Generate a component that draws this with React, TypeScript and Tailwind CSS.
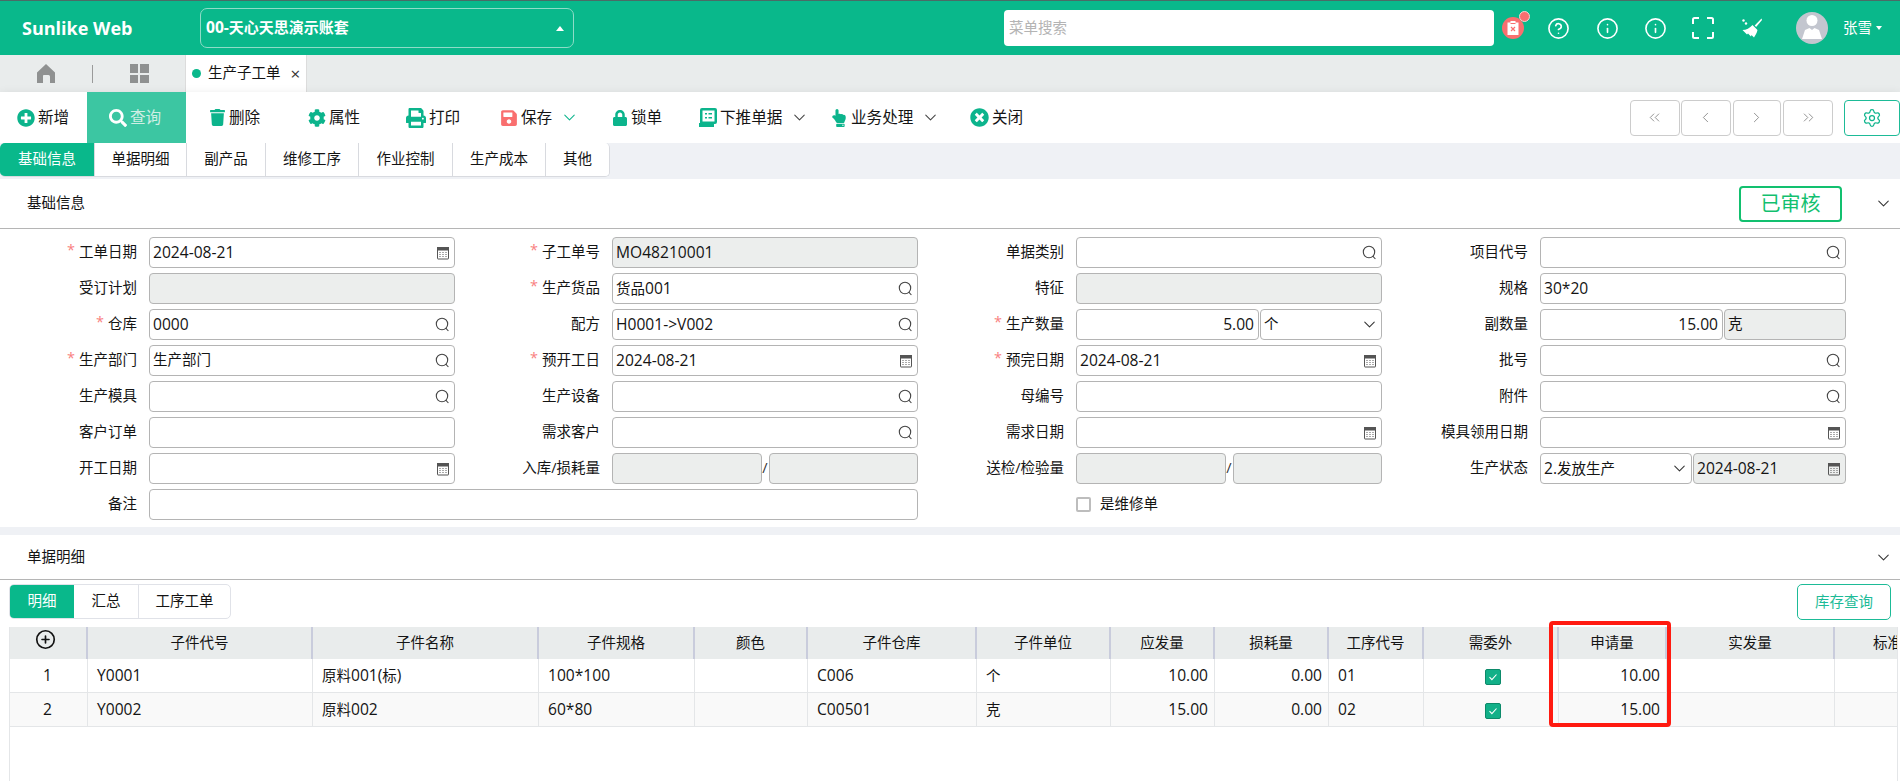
import React from "react";
import { ChevronDown, ChevronLeft, ChevronRight, ChevronsLeft, ChevronsRight, CirclePlus, Settings, CircleHelp, Info } from "lucide-react";
import { FaPlusCircle, FaSearch, FaTrash, FaCog, FaPrint, FaSave, FaLock, FaHandPointUp, FaTimesCircle } from "react-icons/fa";

/* Latin runs sit slightly larger than the CJK runs, as they do in the reference */
const T = ({ s }: { s?: string }) => (
  <>
    {(s ?? "").split(/([\x00-\x7f]+)/).map((p, i) =>
      p === "" ? null : /^[\x00-\x7f]/.test(p) ? <span key={i} className="text-[15.6px]">{p}</span> : <span key={i}>{p}</span>
    )}
  </>
);

const Cal = () => (
  <svg width="14" height="14" viewBox="0 0 14 14" fill="none" stroke="#555" className="shrink-0">
    <rect x="1.5" y="1.500" width="11" height="11.500" rx="0.5" />
    <rect x="1.5" y="1.500" width="11" height="2.500" fill="#555" />
    <path d="M3.500 6.500h1M6.500 6.500h1M9.500 6.500h1M3.500 8.500h1M6.500 8.500h1M9.500 8.500h1M3.500 10.500h1M6.500 10.500h1M9.500 10.500h1" strokeWidth="1" />
  </svg>
);
const Mag = () => (
  <svg width="15" height="15" viewBox="0 0 15 15" fill="none" stroke="#444" strokeWidth="1.1" className="shrink-0">
    <circle cx="7" cy="7" r="5.700" />
    <path d="M10.800 11.200l2.600 2.800" />
  </svg>
);
const Chev = () => <ChevronDown size={19} strokeWidth={1.3} color="#333" className="shrink-0 mr-[-2px]" />;

type BoxProps = { v?: string; icon?: "s" | "c" | "d"; off?: boolean; right?: boolean; className?: string };
const Box = ({ v, icon, off, right, className = "" }: BoxProps) => (
  <div className={`h-[31px] min-w-0 flex items-center border border-[#b4b4b4] rounded-[4px] pl-[3px] pr-[4px] ${off ? "bg-[#eceeed]" : "bg-white"} ${className}`}>
    <span className={`flex-1 whitespace-nowrap text-[#141414] ${right ? "text-right" : ""}`}><T s={v} /></span>
    {icon === "s" && <Mag />}
    {icon === "c" && <Cal />}
    {icon === "d" && <Chev />}
  </div>
);
const Lab = ({ t, req }: { t?: string; req?: boolean }) => (
  <div className="h-[31px] flex items-center justify-end pr-[12px] whitespace-nowrap text-[#141414]">
    {req && <span className="text-[#f98080] mr-[4px] relative top-[-2px]">*</span>}
    {t}
  </div>
);
const Slash = () => <span className="w-[7px] text-center shrink-0 text-[#333]">/</span>;

const tools = [
  { t: "新增", i: <FaPlusCircle size={18} />, c: "w-[87px] pl-[17px]" },
  { t: "查询", i: <FaSearch size={18} color="#fff" />, c: "w-[99px] pl-[22px] bg-[#3cc6a2] text-[#cfeee4]" },
  { t: "删除", i: <FaTrash size={17} />, c: "w-[98px] pl-[23px]" },
  { t: "属性", i: <FaCog size={18} />, c: "w-[98px] pl-[24px]" },
  { t: "打印", i: <FaPrint size={20} />, c: "w-[94px] pl-[24px]" },
  { t: "保存", i: <FaSave size={18} color="#f96f6f" />, c: "w-[112px] pl-[24px]", d: "#0cb48c" },
  { t: "锁单", i: <FaLock size={16} />, c: "w-[87px] pl-[24px]" },
  {
    t: "下推单据",
    i: (
      <svg width="18" height="19" viewBox="0 0 18 19">
        <path d="M3 0h13a2 2 0 0 1 2 2v12a2 2 0 0 1-2 2h-1v3H0v-4h1V2a2 2 0 0 1 2-2z" fill="#0cb48c" />
        <rect x="3.500" y="2.500" width="12" height="11" fill="#fff" />
        <path d="M6 5h2v1.500H6zM9.500 5h3.500v1.500H9.500zM6 9h2v1.500H6zM9.500 9h3.500v1.500H9.500z" fill="#0cb48c" />
      </svg>
    ),
    c: "w-[131px] pl-[24px]",
    d: "#444",
  },
  { t: "业务处理", i: <FaHandPointUp size={18} />, c: "w-[140px] pl-[24px]", d: "#444" },
  { t: "关闭", i: <FaTimesCircle size={19} />, c: "w-[90px] pl-[24px]" },
];

const pageTabs = [
  ["基础信息", "w-[94px]"],
  ["单据明细", "w-[92px]"],
  ["副产品", "w-[79px]"],
  ["维修工序", "w-[93px]"],
  ["作业控制", "w-[94px]"],
  ["生产成本", "w-[93px]"],
  ["其他", "w-[64px]"],
];

const cols = "grid grid-cols-[78px_225px_226px_156px_113px_169px_134px_104px_114px_95px_135px_108px_168px_136px]";
const heads = ["子件代号", "子件名称", "子件规格", "颜色", "子件仓库", "子件单位", "应发量", "损耗量", "工序代号", "需委外", "申请量", "实发量", "标准用量"];
const rows = [
  ["1", "Y0001", "原料001(标)", "100*100", "", "C006", "个", "10.00", "0.00", "01", "x", "10.00", "", ""],
  ["2", "Y0002", "原料002", "60*80", "", "C00501", "克", "15.00", "0.00", "02", "x", "15.00", "", ""],
];
const rightCols = [7, 8, 11];

const Check = () => (
  <span className="w-[16px] h-[16px] rounded-[2px] bg-[#12b088] border border-[#0c8a6a] flex items-center justify-center">
    <svg width="10" height="10" viewBox="0 0 10 10" fill="none" stroke="#fff" strokeWidth="1.1">
      <path d="M1.500 5.200l2.400 2.400L8.500 2.500" />
    </svg>
  </span>
);

export default function App() {
  return (
    <div className="relative w-[1900px] h-[781px] overflow-hidden bg-white text-[14.5px] leading-none font-['Open_Sans','Noto_Sans_CJK_SC',sans-serif]">
      {/* top bar */}
      <header className="h-[55px] bg-[#09b88b] border-t border-[#4a6b66] flex items-center text-white">
        <div className="w-[200px] pl-[22px] shrink-0 text-[18px] font-bold whitespace-nowrap">Sunlike Web</div>
        <div className="w-[374px] h-[40px] shrink-0 border border-[#8edcc7] rounded-[7px] flex items-center justify-between pl-[5px] pr-[9px] font-bold text-[15px]">
          <span><T s="00-天心天思演示账套" /></span>
          <span className="w-0 h-0 border-x-[4.5px] border-x-transparent border-b-[5px] border-b-white" />
        </div>
        <div className="ml-[430px] w-[490px] h-[36px] shrink-0 bg-white rounded-[4px] flex items-center pl-[5px] text-[#b4b4b4]">菜单搜索</div>
        <div className="w-[38px] flex justify-center">
          <div className="relative w-[22px] h-[22px] rounded-full bg-[#f96f6f] flex items-center justify-center">
            <svg width="12" height="14" viewBox="0 0 12 14">
              <rect x="0.5" y="1.500" width="11" height="12.500" fill="#fff" />
              <rect x="3.500" y="0" width="5" height="3" fill="#fff" />
              <rect x="3.500" y="2" width="5" height="1" fill="#f96f6f" />
              <path d="M4 6l4 4M8 6l-4 4" stroke="#f96f6f" strokeWidth="1.2" />
            </svg>
            <span className="absolute right-[-5.5px] top-[-6px] w-[11px] h-[11px] rounded-full bg-[#f96f6f] border border-[#f8d3d3]" />
          </div>
        </div>
        <div className="w-[52px] flex justify-center"><CircleHelp size={23} strokeWidth={1.7} /></div>
        <div className="w-[47px] flex justify-center"><Info size={23} strokeWidth={1.7} /></div>
        <div className="w-[48px] flex justify-center"><Info size={23} strokeWidth={1.7} /></div>
        <div className="w-[48px] flex justify-center">
          <svg width="22" height="22" viewBox="0 0 22 22" fill="none" stroke="#fff" strokeWidth="2">
            <path d="M1 7V2.500A1.500 1.500 0 0 1 2.500 1H7M15 1h4.500A1.500 1.500 0 0 1 21 2.500V7M21 15v4.500a1.500 1.500 0 0 1-1.500 1.500H15M7 21H2.500A1.500 1.500 0 0 1 1 19.500V15" />
          </svg>
        </div>
        <div className="w-[49px] flex justify-center">
          <svg width="20" height="20" viewBox="0 0 20 20" fill="#fff">
            <path d="M19.500 .5l-6.800 7 1.400 1.400L20 2z" />
            <path d="M10.500 7l5 5c-.5 3-2.500 6-3.500 7.500l-2.500-2.500-.5 1.500-3-3-1 1L.5 12c3.500 0 7.500-2 10-5z" />
            <circle cx="1.500" cy="2.500" r="1.200" />
            <circle cx="4" cy="5.500" r="1.200" />
          </svg>
        </div>
        <div className="w-[67px] pl-[20px]">
          <div className="w-[32px] h-[32px] rounded-full bg-[#c3c6cf] overflow-hidden flex items-center justify-center">
            <svg width="20" height="26" viewBox="0 0 20 26" fill="#fff">
              <circle cx="10" cy="5.500" r="5.500" />
              <path d="M0 24l3-9 4.500-2 2.500 2 2.500-2 4.500 2 3 9z" />
            </svg>
          </div>
        </div>
        <span className="whitespace-nowrap">张雪</span>
        <span className="ml-[4px] w-0 h-0 border-x-[3.5px] border-x-transparent border-t-[4px] border-t-white" />
      </header>

      {/* page tabs */}
      <div className="h-[37px] bg-[#e9ecec] flex items-center">
        <div className="w-[92px] flex justify-center">
          <svg width="18" height="19" viewBox="0 0 18 19" fill="#8f9191">
            <path d="M9 0l9 8.500V19h-5v-6.500a1.500 1.500 0 0 0-1.500-1.500h-5A1.500 1.500 0 0 0 6 12.500V19H0V8.500z" />
          </svg>
        </div>
        <div className="w-px h-[18px] bg-[#9a9a9a]" />
        <div className="w-[92px] flex justify-center shrink-0">
          <div className="grid grid-cols-2 gap-[2px] w-[19px] h-[19px]">
            <span className="bg-[#8f9191]" /><span className="bg-[#8f9191]" /><span className="bg-[#8f9191]" /><span className="bg-[#8f9191]" />
          </div>
        </div>
        <div className="w-[122px] h-[37px] bg-white border-l border-r border-[#dcdcdc] flex items-center pl-[6px] text-[#141414]">
          <span className="w-[9px] h-[9px] rounded-full bg-[#09b88b] mr-[7px]" />
          <span>生产子工单</span>
          <span className="ml-[10px] text-[17px] text-[#333]">×</span>
        </div>
      </div>

      {/* toolbar */}
      <div className="relative z-10 h-[51px] bg-white flex shadow-[0_3px_10px_rgba(0,0,0,0.13)] text-[15.6px]">
        {tools.map((x) => (
          <div key={x.t} className={`h-full shrink-0 flex items-center gap-[3px] text-[#141414] ${x.c}`}>
            <span className="text-[#0cb48c] flex items-center shrink-0">{x.i}</span>
            <span className="whitespace-nowrap">{x.t}</span>
            {x.d && <ChevronDown size={19} strokeWidth={1.3} color={x.d} className="ml-[5px] shrink-0" />}
          </div>
        ))}
        <div className="ml-auto w-[270px] flex items-center shrink-0 overflow-hidden">
          <div className="w-[50px] h-[36px] border border-[#ccc] rounded-[4px] flex items-center justify-center"><ChevronsLeft size={17} strokeWidth={1.1} color="#777" /></div>
          <div className="ml-[1px] w-[50px] h-[36px] border border-[#ccc] rounded-[4px] flex items-center justify-center"><ChevronLeft size={17} strokeWidth={1.1} color="#777" /></div>
          <div className="ml-[2px] w-[49px] h-[36px] border border-[#ccc] rounded-[4px] flex items-center justify-center"><ChevronRight size={17} strokeWidth={1.1} color="#777" /></div>
          <div className="ml-[2px] w-[50px] h-[36px] border border-[#ccc] rounded-[4px] flex items-center justify-center"><ChevronsRight size={17} strokeWidth={1.1} color="#777" /></div>
          <div className="ml-[11px] w-[56px] h-[36px] shrink-0 border border-[#1dbb97] rounded-[4px] flex items-center justify-center"><Settings size={20} strokeWidth={1.5} color="#0cb48c" /></div>
        </div>
      </div>

      {/* doc tabs */}
      <div className="relative z-20 h-[36px] bg-[#eff1f5] flex items-start">
        <div className="flex h-[34px] rounded-[5px] overflow-hidden border-r border-b border-[#d8dadf]">
          {pageTabs.map(([t, w], i) => (
            <div key={t} className={`${w} flex items-center justify-center whitespace-nowrap ${i === 0 ? "bg-[#09b88b] text-white" : "bg-white text-[#141414] border-l border-[#d8dadf]"}`}>{t}</div>
          ))}
        </div>
      </div>

      {/* section 1 */}
      <div className="relative z-20 bg-white h-[50px] border-b border-[#b5b5b5] flex items-center pl-[27px] text-[#141414]">
        <span>基础信息</span>
        <div className="ml-auto mr-[58px] w-[103px] h-[36px] border-2 border-[#12c06f] rounded-[4px] text-[#12c06f] text-[20px] flex items-center justify-center">已审核</div>
        <div className="absolute right-[7px] top-[15px]"><ChevronDown size={19} strokeWidth={1.3} color="#333" /></div>
      </div>

      <div className="grid grid-cols-[149px_306px_157px_306px_158px_306px_158px_306px] gap-y-[5px] pt-[8px] pb-[7px]">
        <Lab t="工单日期" req /><Box v="2024-08-21" icon="c" />
        <Lab t="子工单号" req /><Box v="MO48210001" off />
        <Lab t="单据类别" /><Box icon="s" />
        <Lab t="项目代号" /><Box icon="s" />

        <Lab t="受订计划" /><Box off />
        <Lab t="生产货品" req /><Box v="货品001" icon="s" />
        <Lab t="特征" /><Box off />
        <Lab t="规格" /><Box v="30*20" />

        <Lab t="仓库" req /><Box v="0000" icon="s" />
        <Lab t="配方" /><Box v="H0001->V002" icon="s" />
        <Lab t="生产数量" req />
        <div className="flex gap-[1px]"><Box v="5.00" right className="w-[183px] shrink-0" /><Box v="个" icon="d" className="flex-1" /></div>
        <Lab t="副数量" />
        <div className="flex gap-[1px]"><Box v="15.00" right className="w-[183px] shrink-0" /><Box v="克" off className="flex-1" /></div>

        <Lab t="生产部门" req /><Box v="生产部门" icon="s" />
        <Lab t="预开工日" req /><Box v="2024-08-21" icon="c" />
        <Lab t="预完日期" req /><Box v="2024-08-21" icon="c" />
        <Lab t="批号" /><Box icon="s" />

        <Lab t="生产模具" /><Box icon="s" />
        <Lab t="生产设备" /><Box icon="s" />
        <Lab t="母编号" /><Box />
        <Lab t="附件" /><Box icon="s" />

        <Lab t="客户订单" /><Box />
        <Lab t="需求客户" /><Box icon="s" />
        <Lab t="需求日期" /><Box icon="c" />
        <Lab t="模具领用日期" /><Box icon="c" />

        <Lab t="开工日期" /><Box icon="c" />
        <Lab t="入库/损耗量" />
        <div className="flex items-center"><Box off className="flex-1" /><Slash /><Box off className="flex-1" /></div>
        <Lab t="送检/检验量" />
        <div className="flex items-center"><Box off className="flex-1" /><Slash /><Box off className="flex-1" /></div>
        <Lab t="生产状态" />
        <div className="flex gap-[1px]"><Box v="2.发放生产" icon="d" className="w-[152px] shrink-0" /><Box v="2024-08-21" icon="c" off className="flex-1" /></div>

        <Lab t="备注" /><Box className="col-span-3" />
        <div className="col-span-2 pl-[158px] h-[31px] flex items-center gap-[9px] text-[#141414]">
          <span className="w-[15px] h-[15px] border-2 border-[#bdbdbd] rounded-[2px]" />
          是维修单
        </div>
      </div>

      <div className="h-[8px] bg-[#eff1f5]" />

      {/* section 2 */}
      <div className="relative h-[45px] border-b border-[#b5b5b5] flex items-center pl-[27px] text-[#141414]">
        <span>单据明细</span>
        <div className="absolute right-[7px] top-[13px]"><ChevronDown size={19} strokeWidth={1.3} color="#333" /></div>
      </div>

      <div className="flex items-start justify-between pl-[9px] pr-[9px] pt-[4px] h-[47px]">
        <div className="flex h-[35px] rounded-[5px] border border-[#e0e2e8] overflow-hidden text-[#141414]">
          <div className="w-[64px] bg-[#09b88b] text-white flex items-center justify-center">明细</div>
          <div className="w-[64px] flex items-center justify-center">汇总</div>
          <div className="w-[92px] border-l border-[#e0e2e8] flex items-center justify-center">工序工单</div>
        </div>
        <div className="w-[94px] h-[36px] border border-[#1dbb97] rounded-[5px] text-[#1dbb97] flex items-center justify-center">库存查询</div>
      </div>

      {/* table */}
      <div className="ml-[9px] w-[1889px] h-[154px] overflow-hidden border-l border-r border-[#e4e6e8] box-border">
        <div className={`${cols} h-[32px] bg-[#e9ecec] text-[#141414] w-[1961px]`}>
          <div className="flex justify-center pt-[2px] pr-[5px] border-r-2 border-[#c9ccdc]"><CirclePlus size={21} strokeWidth={1.9} color="#111" /></div>
          {heads.map((h) => (
            <div key={h} className="flex items-center justify-center whitespace-nowrap border-r-2 border-[#c9ccdc]">{h}</div>
          ))}
        </div>
        {rows.map((r, ri) => (
          <div key={r[0]} className={`${cols} h-[34px] w-[1961px] border-b border-[#e4e6e8] text-[#141414] ${ri === 1 ? "bg-[#f9f9f9]" : "bg-white"}`}>
            {r.map((c, i) => (
              <div
                key={i}
                className={`h-[33px] pt-[1px] flex items-center whitespace-nowrap border-r border-[#e4e6e8] ${i === 0 ? "justify-center pr-[2px]" : i === 10 ? "justify-center pl-[3px] pt-[2px]" : rightCols.includes(i) ? "justify-end pr-[6px]" : "pl-[9px]"}`}
              >
                {c === "x" ? <Check /> : <T s={c} />}
              </div>
            ))}
          </div>
        ))}
      </div>

      {/* highlight annotation */}
      <div className="absolute left-[1549px] top-[621px] w-[122px] h-[106px] border-4 border-[#ff1a10] rounded-[4px] pointer-events-none" />
    </div>
  );
}
